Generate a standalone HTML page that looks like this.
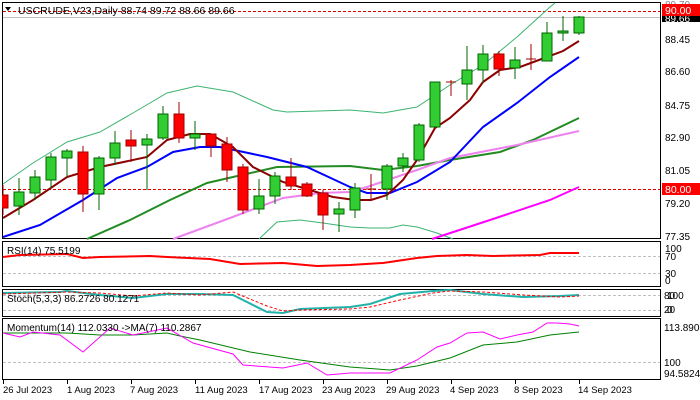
<!DOCTYPE html>
<html><head><meta charset="utf-8"><style>
html,body{margin:0;padding:0;background:#fff;}
svg{display:block;font-family:"Liberation Sans",sans-serif;}
</style></head><body>
<svg width="700" height="400" viewBox="0 0 700 400" xmlns="http://www.w3.org/2000/svg">
<rect width="700" height="400" fill="#fff"/>
<!-- panel frames -->
<g fill="none" stroke="#000" stroke-width="1">
<rect x="2.5" y="2.5" width="658" height="236"/>
<rect x="2.5" y="241.5" width="658" height="45"/>
<rect x="2.5" y="289.5" width="658" height="27"/>
<rect x="2.5" y="318.5" width="658" height="61"/>
</g>
<line x1="3" y1="17.5" x2="660" y2="17.5" stroke="#c0c0c0"/>
<line x1="3" y1="11.5" x2="660" y2="11.5" stroke="#e00000" stroke-dasharray="3,2"/>
<line x1="3" y1="189.5" x2="660" y2="189.5" stroke="#e00000" stroke-dasharray="3,2"/>
<!-- bands -->
<polyline fill="none" stroke="#3CB371" stroke-width="1" points="3,184 33,163 67,142 100,132 133,113 167,93 197,86 233,92 273,110 287,112 350,110 383,113 417,107 450,85 483,65 517,37 550,7 555,3"/>
<polyline fill="none" stroke="#3CB371" stroke-width="1" points="259,239 277,222 300,220 323,223 350,227 370,228 390,228 403,225 417,227 437,233 453,239"/>
<!-- MAs -->
<polyline fill="none" stroke="#228B22" stroke-width="2" points="87,239 130,220 170,200 207,183 233,177 277,167 350,166 383,170 417,166 450,160 500,152 533,140 579,118"/>
<polyline fill="none" stroke="#EE82EE" stroke-width="2" points="173,239 230,218 283,198 320,193 350,192 367,187 417,170 450,158 517,145 579,131"/>
<polyline fill="none" stroke="#FF00FF" stroke-width="2" points="432,239 490,220 550,200 579,187"/>
<polyline fill="none" stroke="#0000FF" stroke-width="2" points="3,237 40,225 83,200 117,178 147,167 173,152 200,147 220,147 267,157 307,167 350,187 367,193 390,193 417,182 450,162 483,127 517,103 550,77 579,57"/>
<polyline fill="none" stroke="#8B0000" stroke-width="2" points="3,218 33,200 67,177 100,167 147,157 167,140 190,134 210,134 233,147 253,167 283,182 333,197 355,200 371,200 387,195 403,180 417,160 435,128 450,118 470,100 483,82 500,70 520,67 547,57 563,51 579,41"/>
<!-- candles -->
<g stroke-width="1">
<g stroke="#a00000" fill="#ff0000">
<line x1="3" y1="185" x2="3" y2="215"/><rect x="-2" y="195" width="10" height="13"/>
<line x1="83" y1="146" x2="83" y2="212"/><rect x="78" y="152" width="10" height="42"/>
<line x1="131" y1="130" x2="131" y2="162"/><rect x="126" y="140" width="10" height="6"/>
<line x1="179" y1="102" x2="179" y2="143"/><rect x="174" y="114" width="10" height="24"/>
<line x1="211" y1="134" x2="211" y2="157"/><rect x="206" y="134" width="10" height="12"/>
<line x1="227" y1="137" x2="227" y2="182"/><rect x="222" y="144" width="10" height="26"/>
<line x1="243" y1="164" x2="243" y2="214"/><rect x="238" y="167" width="10" height="43"/>
<line x1="291" y1="158" x2="291" y2="190"/><rect x="286" y="177" width="10" height="9"/>
<line x1="307" y1="182" x2="307" y2="197"/><rect x="302" y="184" width="10" height="12"/>
<line x1="323" y1="190" x2="323" y2="230"/><rect x="318" y="193" width="10" height="22"/>
<line x1="371" y1="174" x2="371" y2="200"/><line x1="366" y1="189" x2="376" y2="189"/>
<line x1="451" y1="80" x2="451" y2="96"/><line x1="446" y1="82" x2="456" y2="82"/>
<line x1="499" y1="51" x2="499" y2="76"/><rect x="494" y="54" width="10" height="15"/>
<line x1="531" y1="44" x2="531" y2="70"/><line x1="526" y1="59" x2="536" y2="59"/>
</g>
<g stroke="#006400" fill="#32CD32">
<line x1="19" y1="178" x2="19" y2="215"/><rect x="14" y="192" width="10" height="14"/>
<line x1="35" y1="170" x2="35" y2="200"/><rect x="30" y="177" width="10" height="16"/>
<line x1="51" y1="153" x2="51" y2="188"/><rect x="46" y="157" width="10" height="23"/>
<line x1="67" y1="149" x2="67" y2="177"/><rect x="62" y="151" width="10" height="7"/>
<line x1="99" y1="156" x2="99" y2="210"/><rect x="94" y="158" width="10" height="36"/>
<line x1="115" y1="131" x2="115" y2="165"/><rect x="110" y="143" width="10" height="15"/>
<line x1="147" y1="134" x2="147" y2="190"/><rect x="142" y="139" width="10" height="6"/>
<line x1="163" y1="106" x2="163" y2="140"/><rect x="158" y="114" width="10" height="24"/>
<line x1="195" y1="121" x2="195" y2="150"/><rect x="190" y="134" width="10" height="4"/>
<line x1="259" y1="179" x2="259" y2="214"/><rect x="254" y="196" width="10" height="13"/>
<line x1="275" y1="172" x2="275" y2="204"/><rect x="270" y="176" width="10" height="20"/>
<line x1="339" y1="202" x2="339" y2="232"/><rect x="334" y="209" width="10" height="5"/>
<line x1="355" y1="183" x2="355" y2="218"/><rect x="350" y="188" width="10" height="22"/>
<line x1="387" y1="164" x2="387" y2="200"/><rect x="382" y="166" width="10" height="23"/>
<line x1="403" y1="153" x2="403" y2="172"/><rect x="398" y="158" width="10" height="8"/>
<line x1="419" y1="123" x2="419" y2="162"/><rect x="414" y="125" width="10" height="35"/>
<line x1="435" y1="82" x2="435" y2="127"/><rect x="430" y="82" width="10" height="45"/>
<line x1="467" y1="46" x2="467" y2="100"/><rect x="462" y="70" width="10" height="14"/>
<line x1="483" y1="45" x2="483" y2="83"/><rect x="478" y="54" width="10" height="16"/>
<line x1="515" y1="47" x2="515" y2="79"/><rect x="510" y="60" width="10" height="8"/>
<line x1="547" y1="22" x2="547" y2="61"/><rect x="542" y="33" width="10" height="28"/>
<line x1="563" y1="16" x2="563" y2="41"/><rect x="558" y="31" width="10" height="2"/>
<line x1="579" y1="16" x2="579" y2="35"/><rect x="574" y="17" width="10" height="16"/>
</g>
</g>
<rect x="0" y="0" width="2" height="239" fill="#fff"/>
<!-- title -->
<path d="M5 7 L11 7 L8 11 Z" fill="#000"/>
<text x="18" y="14" font-size="10.5" fill="#000">USCRUDE,V23,Daily 88.74 89.72 88.66 89.66</text>
<!-- right axis main -->
<g font-size="10" fill="#000">
<text x="665" y="8" fill="#888">89.70</text>
<text x="665" y="43">88.45</text>
<text x="665" y="75">86.60</text>
<text x="665" y="109">84.75</text>
<text x="665" y="141">82.90</text>
<text x="665" y="174">81.05</text>
<text x="665" y="207">79.20</text>
<text x="665" y="240">77.35</text>
</g>
<rect x="662" y="14" width="38" height="8" fill="#000"/>
<text x="665" y="22" font-size="10" fill="#fff">89.66</text>
<rect x="662" y="4" width="38" height="12" fill="#f00"/>
<text x="665" y="14" font-size="10.5" fill="#fff">90.00</text>
<rect x="662" y="183" width="38" height="12" fill="#f00"/>
<text x="665" y="193" font-size="10.5" fill="#fff">80.00</text>
<!-- RSI -->
<line x1="3" y1="256.5" x2="660" y2="256.5" stroke="#c0c0c0" stroke-dasharray="3,2"/>
<line x1="3" y1="273.5" x2="660" y2="273.5" stroke="#c0c0c0" stroke-dasharray="3,2"/>
<polyline fill="none" stroke="#f00" stroke-width="2" points="3,257 20,255 67,254 83,258 100,257 150,256 167,257 210,259 240,264 283,263 317,266 350,265 383,263 417,258 437,256 467,255 493,256 540,255 550,253 579,253"/>
<text x="7" y="254" font-size="10" fill="#000">RSI(14) 75.5199</text>
<g font-size="10" fill="#000"><text x="665" y="252">100</text><text x="665" y="260">70</text><text x="665" y="277">30</text><text x="665" y="284">0</text></g>
<!-- Stoch -->
<line x1="3" y1="295.5" x2="660" y2="295.5" stroke="#c0c0c0" stroke-dasharray="3,2"/>
<line x1="3" y1="310.5" x2="660" y2="310.5" stroke="#c0c0c0" stroke-dasharray="3,2"/>
<polyline fill="none" stroke="#20B2AA" stroke-width="2" points="3,293 60,292 67,291 100,295 133,298 167,294 200,294 233,295 267,312 283,313 300,309 350,307 370,304 400,294 433,291 450,290 483,294 523,297 560,296 579,295"/>
<polyline fill="none" stroke="#f00" stroke-width="1" stroke-dasharray="3,2" points="3,294 67,292 100,293 133,296 167,293 200,295 233,292 267,306 283,311 300,310 350,309 370,307 400,300 433,293 450,291 483,292 523,295 560,297 579,296"/>
<text x="7" y="302" font-size="10" fill="#000">Stoch(5,3,3) 86.2726 80.1271</text>
<g font-size="10" fill="#000"><text x="664" y="299">80</text><text x="667" y="299">100</text><text x="664" y="313">20</text><text x="667" y="313">0</text></g>
<!-- Momentum -->
<line x1="3" y1="362.5" x2="660" y2="362.5" stroke="#c0c0c0" stroke-dasharray="3,2"/>
<polyline fill="none" stroke="#008000" stroke-width="1" points="3,333 67,333 100,335 133,335 167,333 180,336 200,340 250,352 300,360 350,367 390,370 417,366 450,358 483,345 517,342 550,335 579,332"/>
<polyline fill="none" stroke="#FF00FF" stroke-width="1" points="3,333 20,337 33,332 60,335 83,352 110,328 133,335 167,328 193,343 233,354 243,365 283,368 307,363 327,375 350,373 390,373 417,360 437,347 450,343 467,333 483,332 500,339 517,335 533,332 547,323 557,323 570,324 579,326"/>
<text x="7" y="331" font-size="10" fill="#000">Momentum(14) 112.0330 -&gt;MA(7) 110.2867</text>
<g font-size="10" fill="#000"><text x="664" y="331">113.8901</text><text x="664" y="366">100</text><text x="664" y="377">94.5824</text></g>
<!-- dates -->
<g font-size="9.5" fill="#000">
<text x="3" y="393">26 Jul 2023</text>
<text x="67" y="393">1 Aug 2023</text>
<text x="130" y="393">7 Aug 2023</text>
<text x="195" y="393">11 Aug 2023</text>
<text x="259" y="393">17 Aug 2023</text>
<text x="322" y="393">23 Aug 2023</text>
<text x="386" y="393">29 Aug 2023</text>
<text x="450" y="393">4 Sep 2023</text>
<text x="514" y="393">8 Sep 2023</text>
<text x="578" y="393">14 Sep 2023</text>
</g>
<g stroke="#000"><line x1="3.5" y1="380" x2="3.5" y2="384"/><line x1="67.5" y1="380" x2="67.5" y2="384"/><line x1="131.5" y1="380" x2="131.5" y2="384"/><line x1="195.5" y1="380" x2="195.5" y2="384"/><line x1="259.5" y1="380" x2="259.5" y2="384"/><line x1="323.5" y1="380" x2="323.5" y2="384"/><line x1="387.5" y1="380" x2="387.5" y2="384"/><line x1="451.5" y1="380" x2="451.5" y2="384"/><line x1="515.5" y1="380" x2="515.5" y2="384"/><line x1="579.5" y1="380" x2="579.5" y2="384"/></g>
</svg>
</body></html>
